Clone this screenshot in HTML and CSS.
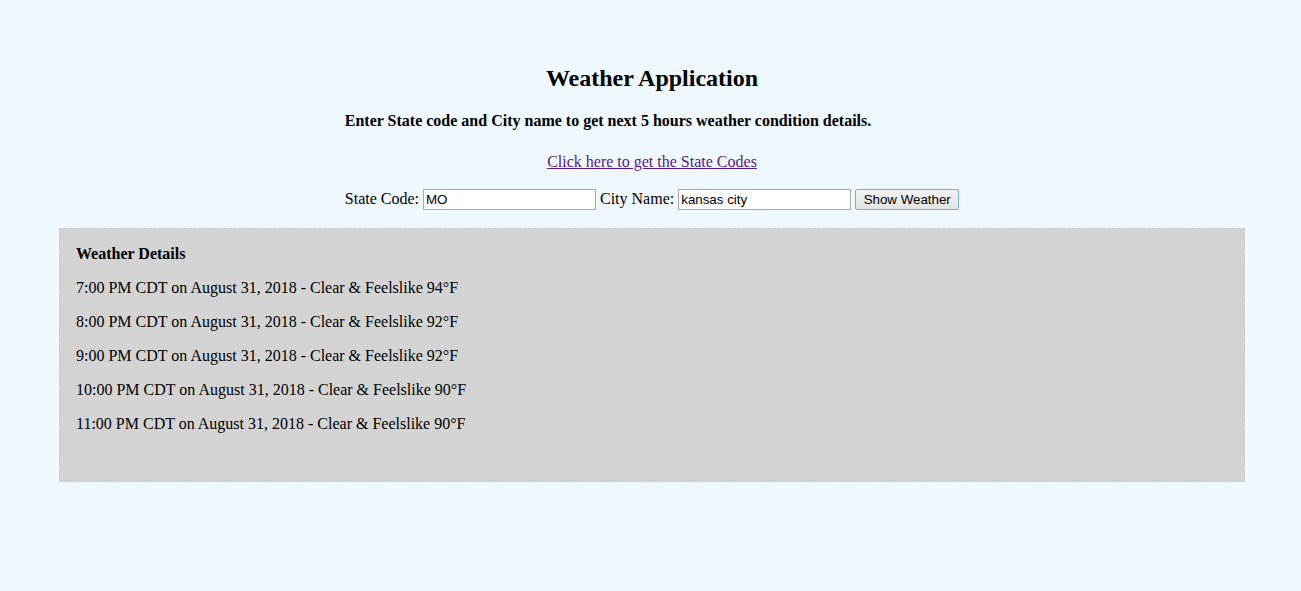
FILE: index.html
```html
<!DOCTYPE html>
<html>
<head>
<meta charset="utf-8">
<title>Weather Application</title>
<link rel="stylesheet" href="styles.css">
</head>
<body>
<div class="head">
  <h2 class="title">Weather Application</h2>
  <div class="wrap">
    <h4 class="subtitle">Enter State code and City name to get next 5 hours weather condition details.</h4>
    <p class="link-row"><a class="codes" href="#">Click here to get the State Codes</a></p>
    <form class="form">
      <label class="lbl">State Code: <input class="field" type="text" value="MO"></label>
      <label class="lbl">City Name: <input class="field" type="text" value="kansas city"></label>
      <button class="btn" type="button">Show Weather</button>
    </form>
  </div>
</div>
<div class="panel">
  <p class="row"><b>Weather Details</b></p>
  <p class="row">7:00 PM CDT on August 31, 2018 - Clear &amp; Feelslike 94°F</p>
  <p class="row">8:00 PM CDT on August 31, 2018 - Clear &amp; Feelslike 92°F</p>
  <p class="row">9:00 PM CDT on August 31, 2018 - Clear &amp; Feelslike 92°F</p>
  <p class="row">10:00 PM CDT on August 31, 2018 - Clear &amp; Feelslike 90°F</p>
  <p class="row">11:00 PM CDT on August 31, 2018 - Clear &amp; Feelslike 90°F</p>
</div>
</body>
</html>
```
FILE: styles.css
```css
html, body {
  margin: 0;
  padding: 0;
  background: #f0f8ff;
}
body {
  font-family: "Liberation Serif", "Times New Roman", serif;
  font-size: 16px;
  color: #000;
}
.head {
  text-align: center;
  padding-left: 3px;
}
.title {
  margin: 64px 0 0;
  font-size: 24px;
  line-height: 28px;
  font-weight: bold;
}
.wrap {
  display: inline-block;
  text-align: center;
}
.subtitle {
  margin: 20px 0 0;
  font-size: 16px;
  line-height: 18px;
  font-weight: bold;
  text-align: left;
}
.link-row {
  margin: 23px 0 0;
  line-height: 18px;
}
.codes {
  color: #551a8b;
  text-decoration: underline;
}
.form {
  margin: 17px 0 0;
  height: 22px;
  display: flex;
  align-items: center;
  gap: 4px;
  line-height: 22px;
}
.lbl {
  display: inline-flex;
  align-items: center;
  gap: 4px;
}
.field {
  box-sizing: border-box;
  width: 173px;
  height: 21px;
  margin: 0;
  padding: 1px 2px;
  border: 1px solid #a9a9a9;
  background: #fff;
  font-family: "Liberation Sans", Arial, sans-serif;
  font-size: 13.33px;
  color: #000;
}
.btn {
  box-sizing: border-box;
  height: 21px;
  width: 104px;
  margin: 0;
  padding: 0 6px;
  border: 1px solid #7aa9dc;
  border-radius: 2px;
  background: linear-gradient(#f3f3f3, #e3e3e3);
  font-family: "Liberation Sans", Arial, sans-serif;
  font-size: 13.33px;
  color: #000;
}
.panel {
  margin: 18px 56px 0 59px;
  padding: 0 16px 32px;
  background: #d3d3d3;
  border: 1px dashed #cbcbcb;
}
.row {
  margin: 16px 0;
  line-height: 18px;
}
```
